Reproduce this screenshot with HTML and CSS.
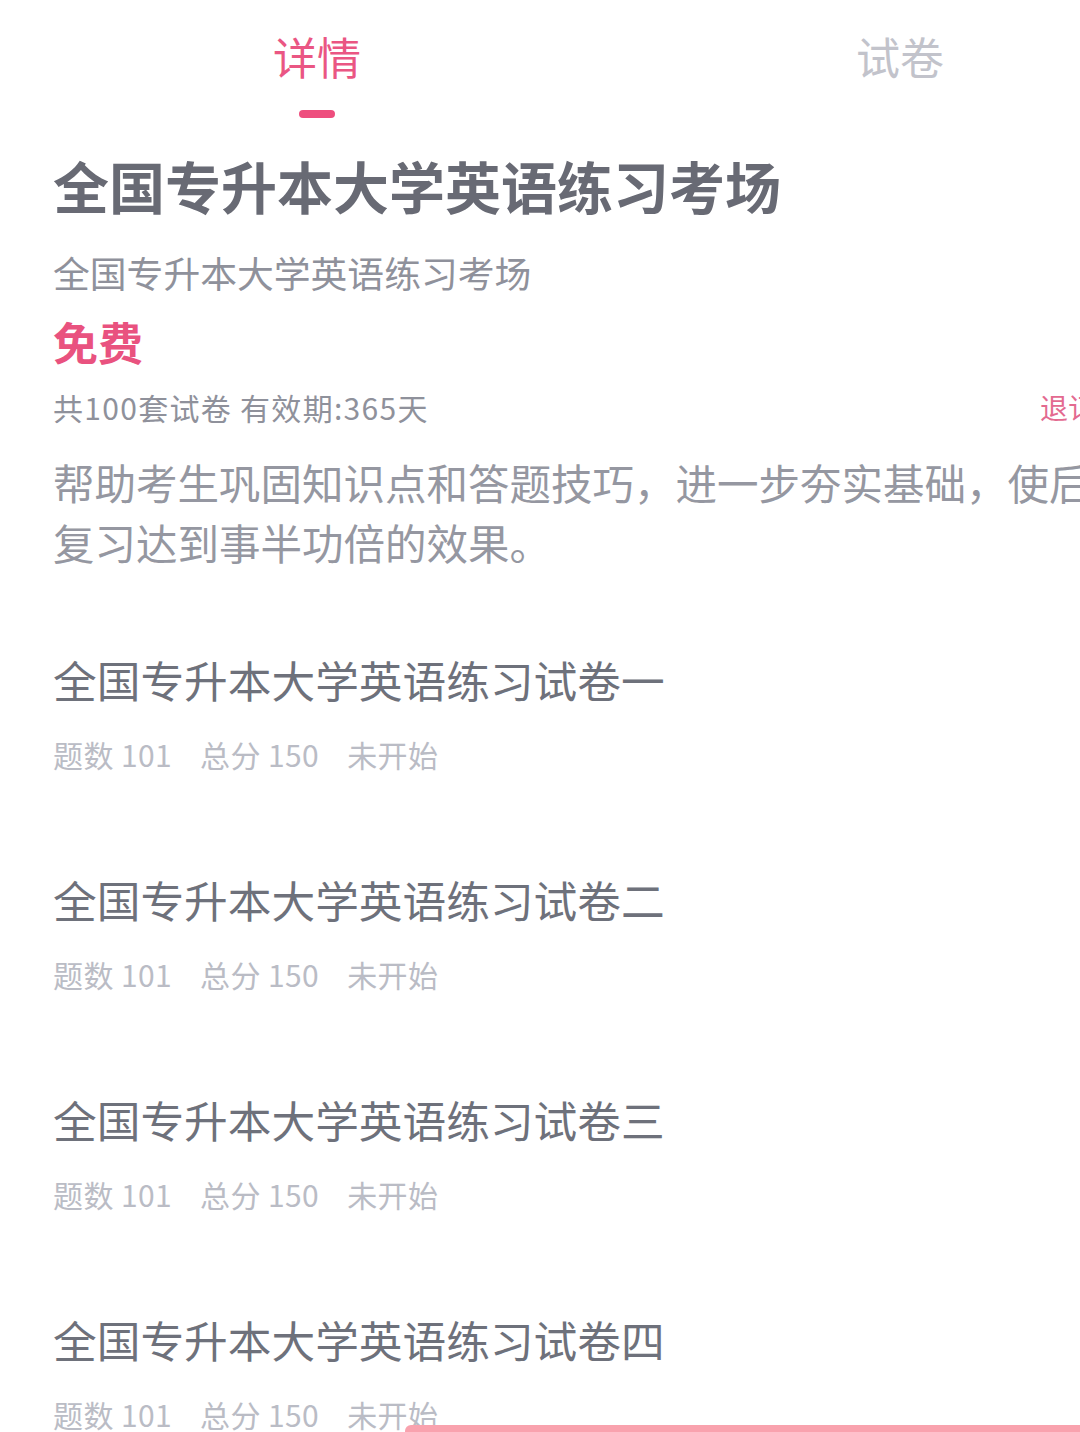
FILE: index.html
```html
<!DOCTYPE html>
<html lang="zh-CN">
<head>
<meta charset="utf-8">
<title>全国专升本大学英语练习考场</title>
<link rel="stylesheet" href="styles.css">
</head>
<body>
<div class="page">
  <nav class="tabs">
    <div class="tab active"><span class="tab-label">详情</span><span class="tab-bar"></span></div>
    <div class="tab"><span class="tab-label">试卷</span></div>
  </nav>
  <section class="detail">
    <h1 class="title">全国专升本大学英语练习考场</h1>
    <p class="subtitle">全国专升本大学英语练习考场</p>
    <p class="price">免费</p>
    <div class="info-row">
      <span class="info">共100套试卷 有效期:365天</span>
      <span class="refund">退订</span>
    </div>
    <p class="desc">帮助考生巩固知识点和答题技巧，进一步夯实基础，使后期复习达到事半功倍的效果。</p>
  </section>
  <ul class="papers">
    <li class="paper">
      <div class="paper-title">全国专升本大学英语练习试卷一</div>
      <div class="paper-meta"><span>题数 101</span><span>总分 150</span><span>未开始</span></div>
    </li>
    <li class="paper">
      <div class="paper-title">全国专升本大学英语练习试卷二</div>
      <div class="paper-meta"><span>题数 101</span><span>总分 150</span><span>未开始</span></div>
    </li>
    <li class="paper">
      <div class="paper-title">全国专升本大学英语练习试卷三</div>
      <div class="paper-meta"><span>题数 101</span><span>总分 150</span><span>未开始</span></div>
    </li>
    <li class="paper">
      <div class="paper-title">全国专升本大学英语练习试卷四</div>
      <div class="paper-meta"><span>题数 101</span><span>总分 150</span><span>未开始</span></div>
    </li>
  </ul>
</div>
<div class="bottom-bar"></div>
</body>
</html>
```
FILE: styles.css
```css
html, body {
  margin: 0;
  padding: 0;
  background: #ffffff;
  overflow: hidden;
}
body {
  font-family: "Noto Sans CJK SC", "Noto Sans", sans-serif;
  width: 1080px;
  height: 1432px;
  position: relative;
}
.page {
  width: 1188px;
}
.tabs {
  display: flex;
  padding: 26px 0 0 217px;
  gap: 383px;
  height: 92px;
}
.tab {
  width: 200px;
  display: flex;
  flex-direction: column;
  align-items: center;
}
.tab-label {
  font-size: 44px;
  line-height: 60px;
  color: #c2c3cb;
}
.tab.active .tab-label {
  color: #ea5683;
}
.tab-bar {
  margin-top: 24px;
  width: 36px;
  height: 8px;
  border-radius: 4px;
  background: #ee4e7e;
}
.detail {
  padding: 32px 53px 0;
}
.title {
  margin: 0;
  font-size: 56px;
  line-height: 70px;
  font-weight: 700;
  color: #686a74;
}
.subtitle {
  margin: 27px 0 0;
  font-size: 36.8px;
  line-height: 50px;
  color: #8f919b;
}
.price {
  margin: 15px 0 0;
  font-size: 45px;
  line-height: 60px;
  font-weight: 700;
  color: #e9527f;
}
.info-row {
  margin-top: 15px;
  display: flex;
  justify-content: space-between;
  align-items: center;
  line-height: 40px;
  font-size: 30px;
}
.info {
  color: #8f919b;
  letter-spacing: 1.3px;
}
.refund {
  color: #e36a90;
  font-size: 28px;
  margin-right: 39px;
}
.desc {
  margin: 25px 0 0;
  font-size: 41.5px;
  line-height: 60px;
  color: #9597a1;
}
.papers {
  list-style: none;
  margin: 0;
  padding: 77px 53px 0;
}
.paper {
  height: 220px;
}
.paper-title {
  font-size: 43.7px;
  line-height: 60px;
  color: #6e717b;
}
.paper-meta {
  margin-top: 25px;
  display: flex;
  gap: 28px;
  font-size: 30px;
  line-height: 40px;
  letter-spacing: 0.4px;
  color: #babcc5;
}
.bottom-bar {
  position: absolute;
  left: 405px;
  right: 0;
  bottom: 0;
  height: 7px;
  background: #f9a2ae;
  border-top-left-radius: 6px;
}
```
